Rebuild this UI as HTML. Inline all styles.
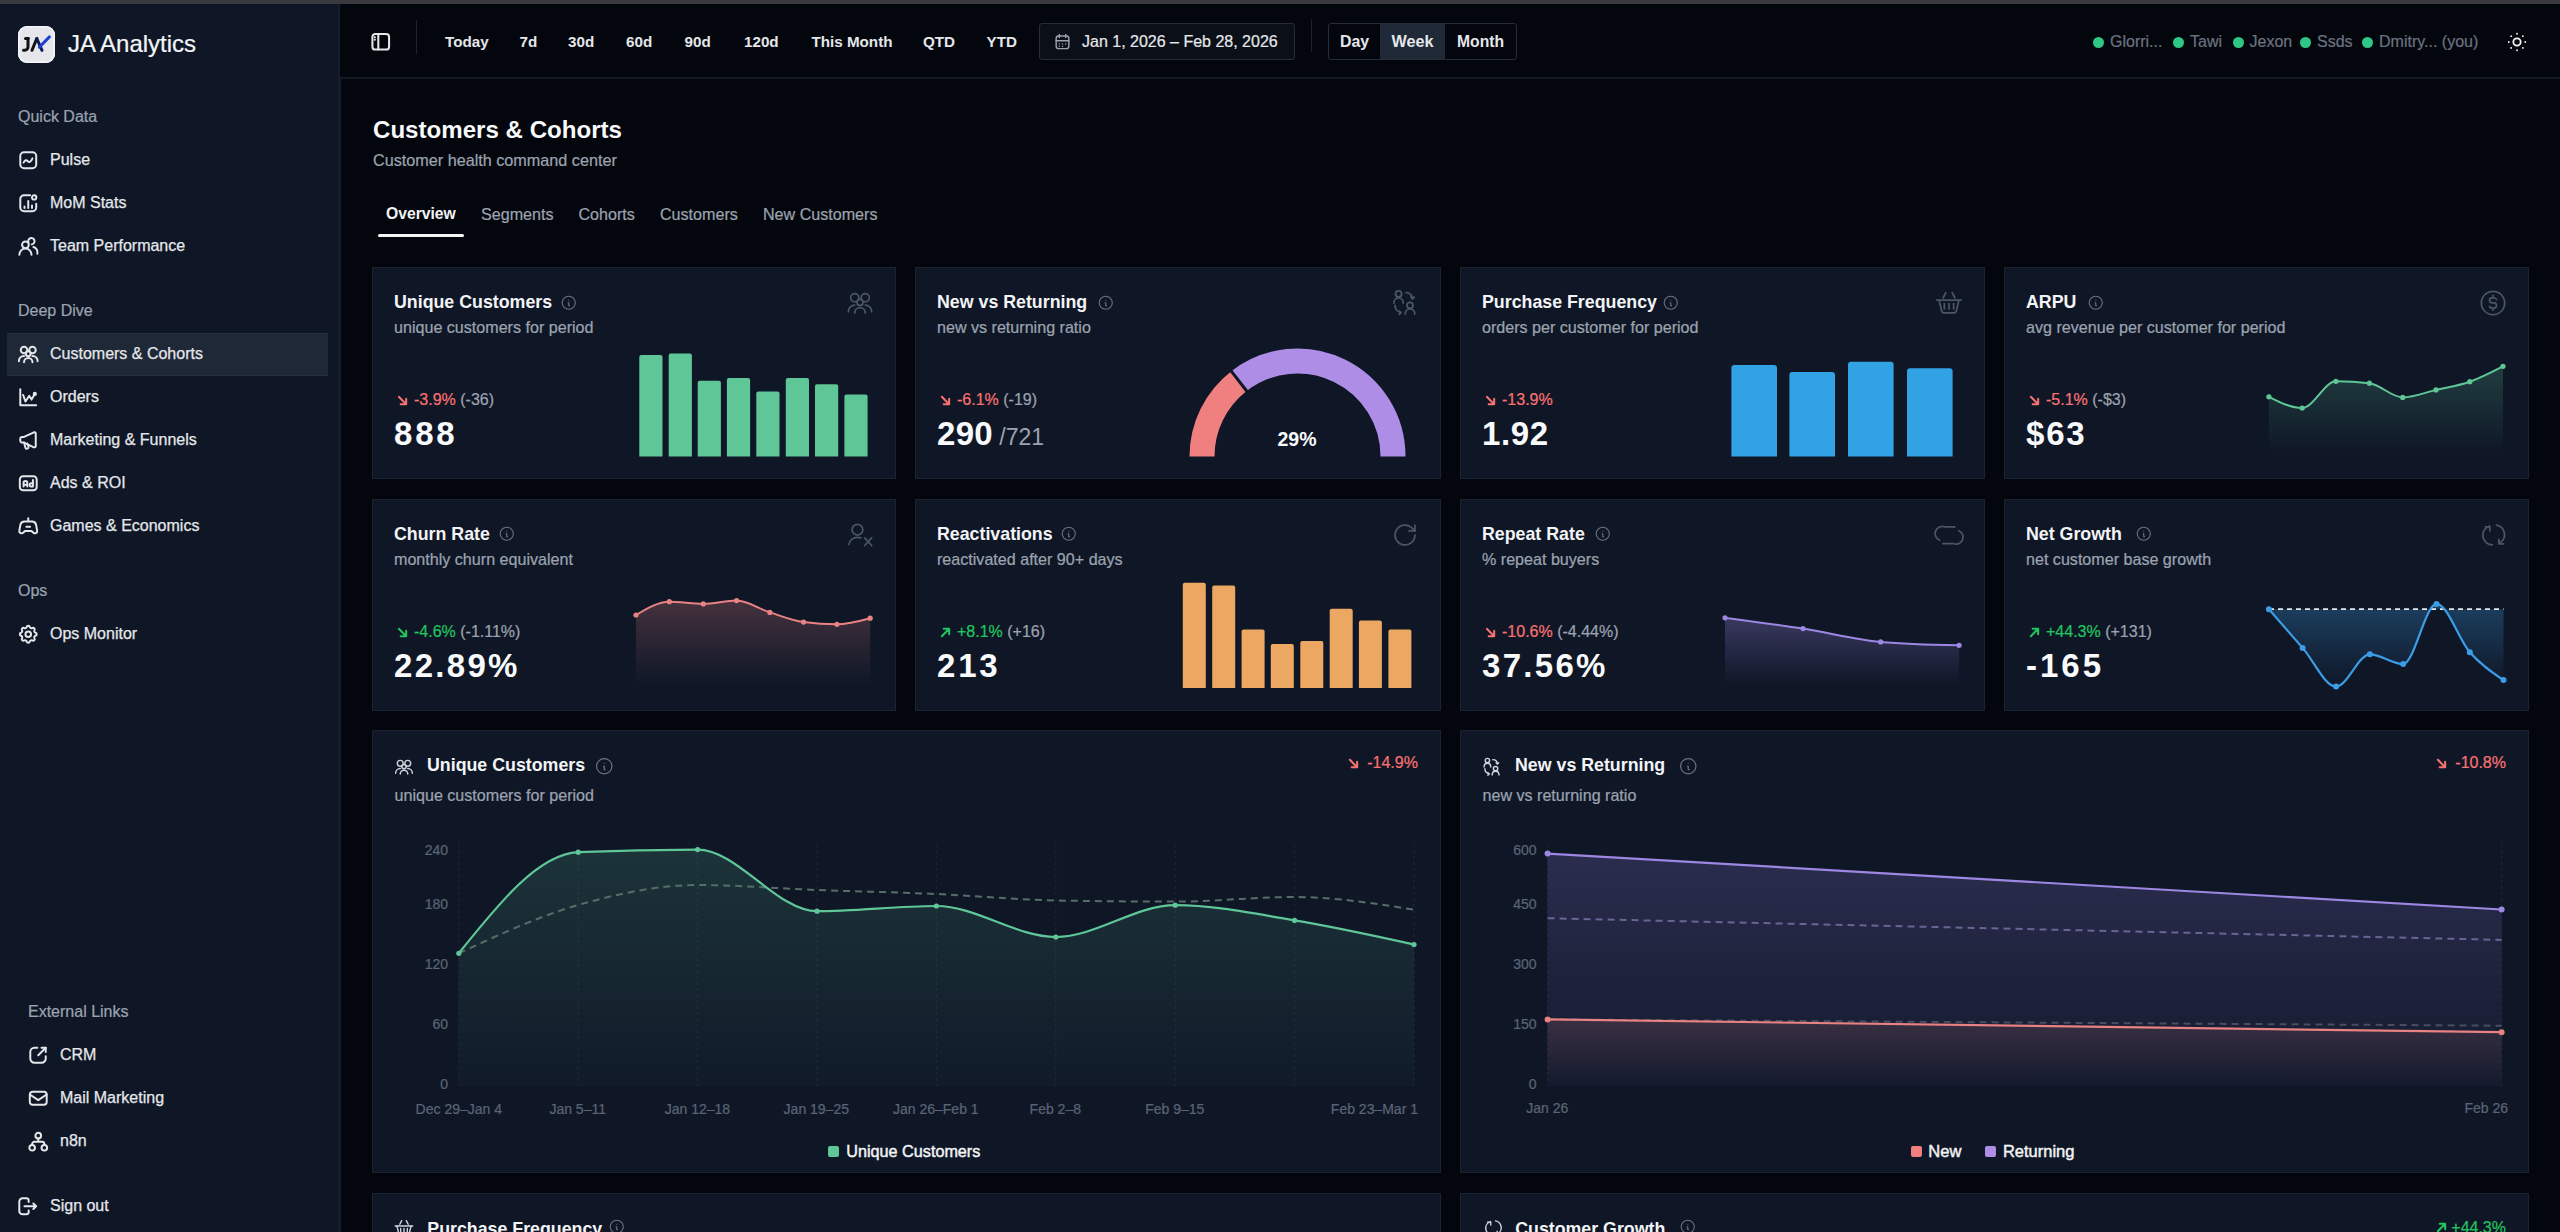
<!DOCTYPE html><html><head><meta charset="utf-8"><title>JA Analytics</title><style>
*{margin:0;padding:0;box-sizing:border-box}
html,body{width:2560px;height:1232px;overflow:hidden;background:#04060d;font-family:"Liberation Sans",sans-serif}
.t{position:absolute;line-height:1;white-space:nowrap}
.r{position:absolute}
.ic{position:absolute;overflow:visible}
svg.abs{position:absolute;left:0;top:0;overflow:visible}
</style></head><body>
<div class="r" style="left:0px;top:0px;width:2560px;height:4px;background:#3a3940;"></div>
<div class="r" style="left:0px;top:4px;width:338px;height:1228px;background:#0f1727;"></div>
<div class="r" style="left:338px;top:4px;width:3px;height:1228px;background:#171d2a;"></div>
<div class="r" style="left:340px;top:4px;width:2220px;height:73px;background:#04060d;"></div>
<div class="r" style="left:340px;top:77px;width:2220px;height:2px;background:#141923;"></div>
<div class="r" style="left:17.5px;top:25.5px;width:37.5px;height:37.5px;background:#e5e7eb;border-radius:9px;box-shadow:inset 0 0 0 1.5px #f5f6fa"></div>
<svg class="abs" width="2560" height="1232" viewBox="0 0 2560 1232" fill="none" stroke-linecap="round"><path d="M25.5 38.5h3M28 38.5v8.5a3.2 3.2 0 0 1-3.2 3.2h-1.3" stroke="#111" stroke-width="3"/><path d="M32 50.3L36.8 38.5" stroke="#111" stroke-width="3"/><path d="M36.8 38.5L42 50.3" stroke="#0b1a5a" stroke-width="3"/><path d="M39.5 47L49.3 37" stroke="#1d3fd0" stroke-width="3.2"/></svg>
<div class="t" style="left:68px;top:32.49px;font-size:24px;font-weight:400;color:#f3f4f6;-webkit-text-stroke:0.22px #f3f4f6;">JA Analytics</div>
<div class="t" style="left:18px;top:109.46px;font-size:16px;font-weight:400;color:#9ca3af;-webkit-text-stroke:0.22px #9ca3af;">Quick Data</div>
<svg class="ic" style="left:16.75px;top:148.75px;width:22.5px;height:22.5px;color:#e5e7eb" viewBox="0 0 24 24" fill="none" stroke="currentColor" stroke-width="2.1" stroke-linecap="round" stroke-linejoin="round"><rect x="3.5" y="3.5" width="17" height="17" rx="4"/><path d="M7 14.5c1.5-3 3-3 4.5-1.5s3 1.5 5-3"/></svg>
<div class="t" style="left:50px;top:152.46px;font-size:16px;font-weight:400;color:#e5e7eb;-webkit-text-stroke:0.25px #e5e7eb">Pulse</div>
<svg class="ic" style="left:16.75px;top:191.75px;width:22.5px;height:22.5px;color:#e5e7eb" viewBox="0 0 24 24" fill="none" stroke="currentColor" stroke-width="2.1" stroke-linecap="round" stroke-linejoin="round"><path d="M20.5 12.5v4a4 4 0 0 1-4 4h-9a4 4 0 0 1-4-4v-9a4 4 0 0 1 4-4H14"/><circle cx="18.3" cy="5.8" r="2.3"/><path d="M8 17v-1.5M12 17V9.5M16 17v-2.5"/></svg>
<div class="t" style="left:50px;top:195.46px;font-size:16px;font-weight:400;color:#e5e7eb;-webkit-text-stroke:0.25px #e5e7eb">MoM Stats</div>
<svg class="ic" style="left:16.75px;top:234.75px;width:22.5px;height:22.5px;color:#e5e7eb" viewBox="0 0 24 24" fill="none" stroke="currentColor" stroke-width="2.1" stroke-linecap="round" stroke-linejoin="round"><circle cx="9" cy="10.5" r="3.6"/><path d="M12.3 8.2a3.4 3.4 0 1 1 3.4 1.8"/><path d="M2.5 21a6.5 6.5 0 0 1 13 0"/><path d="M17.5 12.8a6 6 0 0 1 4.2 7.2"/></svg>
<div class="t" style="left:50px;top:238.46px;font-size:16px;font-weight:400;color:#e5e7eb;-webkit-text-stroke:0.25px #e5e7eb">Team Performance</div>
<div class="t" style="left:18px;top:303.46px;font-size:16px;font-weight:400;color:#9ca3af;-webkit-text-stroke:0.22px #9ca3af;">Deep Dive</div>
<div class="r" style="left:7px;top:333px;width:321px;height:43px;background:#1e2837;box-shadow:inset 0 1px 0 #243042, inset 0 -1px 0 #243042"></div>
<svg class="ic" style="left:16.75px;top:342.75px;width:22.5px;height:22.5px;color:#e5e7eb" viewBox="0 0 24 24" fill="none" stroke="currentColor" stroke-width="2.1" stroke-linecap="round" stroke-linejoin="round"><circle cx="7.5" cy="7.5" r="3.5"/><circle cx="16.5" cy="7.5" r="3.5"/><circle cx="12" cy="11.5" r="2.6"/><path d="M2 19.5c0-3.2 2.3-5.7 5.5-5.7"/><path d="M22 19.5c0-3.2-2.3-5.7-5.5-5.7"/><path d="M7.5 20.5c0-2.6 2-4.6 4.5-4.6s4.5 2 4.5 4.6"/></svg>
<div class="t" style="left:50px;top:346.46px;font-size:16px;font-weight:400;color:#e5e7eb;-webkit-text-stroke:0.25px #e5e7eb">Customers &amp; Cohorts</div>
<svg class="ic" style="left:16.75px;top:385.75px;width:22.5px;height:22.5px;color:#e5e7eb" viewBox="0 0 24 24" fill="none" stroke="currentColor" stroke-width="2.1" stroke-linecap="round" stroke-linejoin="round"><path d="M3.5 3.5v17h17"/><path d="M6.5 9.5l2.5 7 4-6 2.5 4 3.5-6"/><circle cx="19" cy="8.5" r="1.2"/></svg>
<div class="t" style="left:50px;top:389.46px;font-size:16px;font-weight:400;color:#e5e7eb;-webkit-text-stroke:0.25px #e5e7eb">Orders</div>
<svg class="ic" style="left:16.75px;top:428.75px;width:22.5px;height:22.5px;color:#e5e7eb" viewBox="0 0 24 24" fill="none" stroke="currentColor" stroke-width="2.1" stroke-linecap="round" stroke-linejoin="round"><path d="M3.5 10.5a2 2 0 0 1 2-2h2l10.5-5a1.5 1.5 0 0 1 2 1.3v13.4a1.5 1.5 0 0 1-2 1.3l-10.5-5h-2a2 2 0 0 1-2-2z"/><path d="M7.5 14.5l1.5 5.5a1.8 1.8 0 0 0 3.4-1l-1.4-3.5"/></svg>
<div class="t" style="left:50px;top:432.46px;font-size:16px;font-weight:400;color:#e5e7eb;-webkit-text-stroke:0.25px #e5e7eb">Marketing &amp; Funnels</div>
<svg class="ic" style="left:16.75px;top:471.75px;width:22.5px;height:22.5px;color:#e5e7eb" viewBox="0 0 24 24" fill="none" stroke="currentColor" stroke-width="2.1" stroke-linecap="round" stroke-linejoin="round"><rect x="3" y="4.5" width="18" height="15" rx="3.5"/><path d="M7 15.5v-4a2 2 0 0 1 4 0v4M7 13.5h4"/><path d="M17 8.5v7h-1.5a1.8 1.8 0 1 1 1.5-1.8"/></svg>
<div class="t" style="left:50px;top:475.46px;font-size:16px;font-weight:400;color:#e5e7eb;-webkit-text-stroke:0.25px #e5e7eb">Ads &amp; ROI</div>
<svg class="ic" style="left:16.75px;top:514.75px;width:22.5px;height:22.5px;color:#e5e7eb" viewBox="0 0 24 24" fill="none" stroke="currentColor" stroke-width="2.1" stroke-linecap="round" stroke-linejoin="round"><path d="M12 3.5v3"/><path d="M8 7h8a4.5 4.5 0 0 1 4.4 3.6l1.1 6a2.5 2.5 0 0 1-4.4 2L15.5 17h-7L6.9 18.6a2.5 2.5 0 0 1-4.4-2l1.1-6A4.5 4.5 0 0 1 8 7z"/><path d="M10 12.5h4"/></svg>
<div class="t" style="left:50px;top:518.46px;font-size:16px;font-weight:400;color:#e5e7eb;-webkit-text-stroke:0.25px #e5e7eb">Games &amp; Economics</div>
<div class="t" style="left:18px;top:583.46px;font-size:16px;font-weight:400;color:#9ca3af;-webkit-text-stroke:0.22px #9ca3af;">Ops</div>
<svg class="ic" style="left:16.75px;top:622.75px;width:22.5px;height:22.5px;color:#e5e7eb" viewBox="0 0 24 24" fill="none" stroke="currentColor" stroke-width="2.1" stroke-linecap="round" stroke-linejoin="round"><path d="M10.325 4.317c.426-1.756 2.924-1.756 3.35 0a1.724 1.724 0 0 0 2.573 1.066c1.543-.94 3.31.826 2.37 2.37a1.724 1.724 0 0 0 1.065 2.572c1.756.426 1.756 2.924 0 3.35a1.724 1.724 0 0 0-1.066 2.573c.94 1.543-.826 3.31-2.37 2.37a1.724 1.724 0 0 0-2.572 1.065c-.426 1.756-2.924 1.756-3.35 0a1.724 1.724 0 0 0-2.573-1.066c-1.543.94-3.31-.826-2.37-2.37a1.724 1.724 0 0 0-1.065-2.572c-1.756-.426-1.756-2.924 0-3.35a1.724 1.724 0 0 0 1.066-2.573c-.94-1.543.826-3.31 2.37-2.37 1 .608 2.296.07 2.572-1.065z"/><circle cx="12" cy="12" r="3"/></svg>
<div class="t" style="left:50px;top:626.46px;font-size:16px;font-weight:400;color:#e5e7eb;-webkit-text-stroke:0.25px #e5e7eb">Ops Monitor</div>
<div class="t" style="left:28px;top:1004.46px;font-size:16px;font-weight:400;color:#9ca3af;-webkit-text-stroke:0.22px #9ca3af;">External Links</div>
<svg class="ic" style="left:26.75px;top:1043.75px;width:22.5px;height:22.5px;color:#e5e7eb" viewBox="0 0 24 24" fill="none" stroke="currentColor" stroke-width="2.1" stroke-linecap="round" stroke-linejoin="round"><path d="M11 4H8a4.5 4.5 0 0 0-4.5 4.5v7A4.5 4.5 0 0 0 8 20h7.5a4.5 4.5 0 0 0 4.5-4.5V13"/><path d="M12 12l8-8"/><path d="M15.5 4H20v4.5"/></svg>
<div class="t" style="left:60px;top:1047.46px;font-size:16px;font-weight:400;color:#e5e7eb;-webkit-text-stroke:0.25px #e5e7eb">CRM</div>
<svg class="ic" style="left:26.75px;top:1086.75px;width:22.5px;height:22.5px;color:#e5e7eb" viewBox="0 0 24 24" fill="none" stroke="currentColor" stroke-width="2.1" stroke-linecap="round" stroke-linejoin="round"><rect x="3" y="5" width="18" height="14" rx="3"/><path d="M3 8l9 6 9-6"/></svg>
<div class="t" style="left:60px;top:1090.46px;font-size:16px;font-weight:400;color:#e5e7eb;-webkit-text-stroke:0.25px #e5e7eb">Mail Marketing</div>
<svg class="ic" style="left:26.75px;top:1129.75px;width:22.5px;height:22.5px;color:#e5e7eb" viewBox="0 0 24 24" fill="none" stroke="currentColor" stroke-width="2.1" stroke-linecap="round" stroke-linejoin="round"><circle cx="12" cy="6" r="3"/><circle cx="5.5" cy="19" r="3"/><circle cx="18.5" cy="19" r="3"/><path d="M12 9v3.5M5.5 16v-1a2.5 2.5 0 0 1 2.5-2.5h8a2.5 2.5 0 0 1 2.5 2.5v1"/></svg>
<div class="t" style="left:60px;top:1133.46px;font-size:16px;font-weight:400;color:#e5e7eb;-webkit-text-stroke:0.25px #e5e7eb">n8n</div>
<svg class="ic" style="left:15.75px;top:1194.75px;width:22.5px;height:22.5px;color:#e5e7eb" viewBox="0 0 24 24" fill="none" stroke="currentColor" stroke-width="2.1" stroke-linecap="round" stroke-linejoin="round"><path d="M13.5 7.5V6a2.5 2.5 0 0 0-2.5-2.5H7A3.5 3.5 0 0 0 3.5 7v10A3.5 3.5 0 0 0 7 20.5h4a2.5 2.5 0 0 0 2.5-2.5v-1.5"/><path d="M9 12h12.5M18.5 9l3 3-3 3"/></svg>
<div class="t" style="left:50px;top:1198.46px;font-size:16px;font-weight:400;color:#e5e7eb;-webkit-text-stroke:0.25px #e5e7eb">Sign out</div>
<svg class="ic" style="left:369.25px;top:30.25px;width:23.5px;height:23.5px;color:#e5e7eb" viewBox="0 0 24 24" fill="none" stroke="currentColor" stroke-width="2.1" stroke-linecap="round" stroke-linejoin="round"><rect x="3.5" y="4" width="17" height="16" rx="3"/><path d="M9.5 4v16"/><path d="M6 7.5v.01M6 10v.01"/></svg>
<div class="r" style="left:416px;top:20px;width:1px;height:34px;background:#1c212b;"></div>
<div class="t" style="left:445px;top:34.13px;font-size:15.2px;font-weight:700;color:#e5e7eb;">Today</div>
<div class="t" style="left:519.5px;top:34.13px;font-size:15.2px;font-weight:700;color:#e5e7eb;">7d</div>
<div class="t" style="left:568px;top:34.13px;font-size:15.2px;font-weight:700;color:#e5e7eb;">30d</div>
<div class="t" style="left:626px;top:34.13px;font-size:15.2px;font-weight:700;color:#e5e7eb;">60d</div>
<div class="t" style="left:684.5px;top:34.13px;font-size:15.2px;font-weight:700;color:#e5e7eb;">90d</div>
<div class="t" style="left:744px;top:34.13px;font-size:15.2px;font-weight:700;color:#e5e7eb;">120d</div>
<div class="t" style="left:811.5px;top:34.13px;font-size:15.2px;font-weight:700;color:#e5e7eb;">This Month</div>
<div class="t" style="left:923px;top:34.13px;font-size:15.2px;font-weight:700;color:#e5e7eb;">QTD</div>
<div class="t" style="left:986.5px;top:34.13px;font-size:15.2px;font-weight:700;color:#e5e7eb;">YTD</div>
<div class="r" style="left:1039px;top:23px;width:256px;height:37px;background:#0b0f17;border:1px solid #262c38;border-radius:3px"></div>
<svg class="ic" style="left:1053px;top:32px;width:19px;height:19px;color:#9ca3af" viewBox="0 0 24 24" fill="none" stroke="currentColor" stroke-width="1.8" stroke-linecap="round" stroke-linejoin="round"><rect x="4" y="5" width="16" height="16" rx="3"/><path d="M16 3v4M8 3v4M4 11h16"/><path d="M8 15h.01M12 15h.01M16 15h.01M8 18h.01M12 18h.01"/></svg>
<div class="t" style="left:1082px;top:33.96px;font-size:16px;font-weight:400;color:#e5e7eb;-webkit-text-stroke:0.22px #e5e7eb;">Jan 1, 2026 – Feb 28, 2026</div>
<div class="r" style="left:1311px;top:19px;width:1px;height:33px;background:#1c212b;"></div>
<div class="r" style="left:1328px;top:23px;width:189px;height:37px;background:#04060d;border:1px solid #262c38;border-radius:3px"></div>
<div class="r" style="left:1380px;top:24px;width:65px;height:35px;background:#1f2937;"></div>
<div class="t" style="left:1340px;top:33.54px;font-size:15.9px;font-weight:700;color:#e5e7eb;">Day</div>
<div class="t" style="left:1391.5px;top:33.29px;font-size:16.2px;font-weight:700;color:#e5e7eb;">Week</div>
<div class="t" style="left:1457px;top:33.71px;font-size:15.7px;font-weight:700;color:#e5e7eb;">Month</div>
<div class="r" style="left:2092.5px;top:37px;width:11px;height:11px;background:#2fc786;border-radius:50%"></div>
<div class="t" style="left:2110px;top:34.46px;font-size:16px;font-weight:400;color:#6b7280;-webkit-text-stroke:0.22px #6b7280;">Glorri...</div>
<div class="r" style="left:2172.5px;top:37px;width:11px;height:11px;background:#2fc786;border-radius:50%"></div>
<div class="t" style="left:2190px;top:34.46px;font-size:16px;font-weight:400;color:#6b7280;-webkit-text-stroke:0.22px #6b7280;">Tawi</div>
<div class="r" style="left:2232.5px;top:37px;width:11px;height:11px;background:#2fc786;border-radius:50%"></div>
<div class="t" style="left:2249.5px;top:34.46px;font-size:16px;font-weight:400;color:#6b7280;-webkit-text-stroke:0.22px #6b7280;">Jexon</div>
<div class="r" style="left:2300.0px;top:37px;width:11px;height:11px;background:#2fc786;border-radius:50%"></div>
<div class="t" style="left:2317px;top:34.46px;font-size:16px;font-weight:400;color:#6b7280;-webkit-text-stroke:0.22px #6b7280;">Ssds</div>
<div class="r" style="left:2362.0px;top:37px;width:11px;height:11px;background:#2fc786;border-radius:50%"></div>
<div class="t" style="left:2379px;top:34.46px;font-size:16px;font-weight:400;color:#6b7280;-webkit-text-stroke:0.22px #6b7280;">Dmitry... (you)</div>
<svg class="ic" style="left:2506px;top:31px;width:22px;height:22px;color:#f3f4f6" viewBox="0 0 24 24" fill="none" stroke="currentColor" stroke-width="2" stroke-linecap="round" stroke-linejoin="round"><circle cx="12" cy="12" r="4"/><path d="M3 12h.01M12 3v.01M21 12h.01M12 21v.01M5.6 5.6v.01M18.4 5.6v.01M18.4 18.4v.01M5.6 18.4v.01"/></svg>
<div class="t" style="left:373px;top:118.10px;font-size:24.1px;font-weight:700;color:#f9fafb;">Customers &amp; Cohorts</div>
<div class="t" style="left:373px;top:152.09px;font-size:16.2px;font-weight:400;color:#9ca3af;-webkit-text-stroke:0.22px #9ca3af;">Customer health command center</div>
<div class="t" style="left:386px;top:205.91px;font-size:15.7px;font-weight:700;color:#f3f4f6;">Overview</div>
<div class="t" style="left:481px;top:205.57px;font-size:16.1px;font-weight:400;color:#9ca3af;-webkit-text-stroke:0.22px #9ca3af;">Segments</div>
<div class="t" style="left:578.5px;top:205.57px;font-size:16.1px;font-weight:400;color:#9ca3af;-webkit-text-stroke:0.22px #9ca3af;">Cohorts</div>
<div class="t" style="left:660px;top:205.57px;font-size:16.1px;font-weight:400;color:#9ca3af;-webkit-text-stroke:0.22px #9ca3af;">Customers</div>
<div class="t" style="left:763px;top:205.57px;font-size:16.1px;font-weight:400;color:#9ca3af;-webkit-text-stroke:0.22px #9ca3af;">New Customers</div>
<div class="r" style="left:378px;top:234px;width:86px;height:3px;background:#f3f4f6;border-radius:2px"></div>
<div class="r" style="left:372px;top:267px;width:524px;height:212px;background:#0f1727;border:1px solid #1b2232"></div>
<div class="t" style="left:394px;top:293.63px;font-size:17.8px;font-weight:700;color:#f3f4f6;">Unique Customers</div>
<div class="t" style="left:394px;top:318.67px;font-size:16.1px;font-weight:400;color:#9ca3af;-webkit-text-stroke:0.22px #9ca3af;">unique customers for period</div>
<svg class="ic" style="left:846.0px;top:289.0px;width:28px;height:28px;color:#4b5563" viewBox="0 0 24 24" fill="none" stroke="currentColor" stroke-width="1.5" stroke-linecap="round" stroke-linejoin="round"><circle cx="7.5" cy="7.5" r="3.5"/><circle cx="16.5" cy="7.5" r="3.5"/><circle cx="12" cy="11.5" r="2.6"/><path d="M2 19.5c0-3.2 2.3-5.7 5.5-5.7"/><path d="M22 19.5c0-3.2-2.3-5.7-5.5-5.7"/><path d="M7.5 20.5c0-2.6 2-4.6 4.5-4.6s4.5 2 4.5 4.6"/></svg>
<svg class="ic" style="left:397px;top:395.4px;width:11px;height:11px" viewBox="0 0 12 12" fill="none" stroke="#f87171" stroke-width="2.2" stroke-linecap="round" stroke-linejoin="round"><path d="M2 2l8 8M4 10h6V4"/></svg>
<div class="t" style="left:414px;top:391.86px;font-size:16px;color:#f87171;-webkit-text-stroke:0.22px #f87171">-3.9% <span style="color:#9ca3af;-webkit-text-stroke:0.22px #9ca3af">(-36)</span></div>
<div class="t" style="left:394px;top:417.17px;font-size:33px;font-weight:700;color:#f9fafb;letter-spacing:2.8px">888</div>
<div class="r" style="left:915px;top:267px;width:526px;height:212px;background:#0f1727;border:1px solid #1b2232"></div>
<div class="t" style="left:937px;top:293.63px;font-size:17.8px;font-weight:700;color:#f3f4f6;">New vs Returning</div>
<div class="t" style="left:937px;top:318.67px;font-size:16.1px;font-weight:400;color:#9ca3af;-webkit-text-stroke:0.22px #9ca3af;">new vs returning ratio</div>
<svg class="ic" style="left:1391.0px;top:289.0px;width:28px;height:28px;color:#4b5563" viewBox="0 0 24 24" fill="none" stroke="currentColor" stroke-width="1.5" stroke-linecap="round" stroke-linejoin="round"><circle cx="6.5" cy="4.2" r="2.6"/><path d="M2.5 12c0-2.6 1.8-4.5 4-4.5s4 1.9 4 4.5"/><circle cx="16.3" cy="14" r="2.6"/><path d="M12.2 21.5c0-2.6 1.8-4.4 4.1-4.4s4.1 1.8 4.1 4.4"/><path d="M13 3.2a5.5 5.5 0 0 1 5.5 5"/><path d="M17 7l1.5 1.5L20 7"/><path d="M3.5 14a5.5 5.5 0 0 0 5 6"/><path d="M7 19l1.5 1.3L7 21.8"/></svg>
<svg class="ic" style="left:940px;top:395.4px;width:11px;height:11px" viewBox="0 0 12 12" fill="none" stroke="#f87171" stroke-width="2.2" stroke-linecap="round" stroke-linejoin="round"><path d="M2 2l8 8M4 10h6V4"/></svg>
<div class="t" style="left:957px;top:391.86px;font-size:16px;color:#f87171;-webkit-text-stroke:0.22px #f87171">-6.1% <span style="color:#9ca3af;-webkit-text-stroke:0.22px #9ca3af">(-19)</span></div>
<div class="t" style="left:937px;top:417.17px;font-size:33px;font-weight:700;color:#f9fafb;letter-spacing:0.3px">290<span style="font-size:23px;font-weight:400;color:#9ca3af;letter-spacing:0"> /721</span></div>
<div class="r" style="left:1460px;top:267px;width:525px;height:212px;background:#0f1727;border:1px solid #1b2232"></div>
<div class="t" style="left:1482px;top:293.63px;font-size:17.8px;font-weight:700;color:#f3f4f6;">Purchase Frequency</div>
<div class="t" style="left:1482px;top:318.67px;font-size:16.1px;font-weight:400;color:#9ca3af;-webkit-text-stroke:0.22px #9ca3af;">orders per customer for period</div>
<svg class="ic" style="left:1935.0px;top:289.0px;width:28px;height:28px;color:#4b5563" viewBox="0 0 24 24" fill="none" stroke="currentColor" stroke-width="1.5" stroke-linecap="round" stroke-linejoin="round"><path d="M1.5 9.5h21"/><path d="M3.5 9.5l2.2 9.3a2.2 2.2 0 0 0 2.1 1.7h8.4a2.2 2.2 0 0 0 2.1-1.7l2.2-9.3"/><path d="M7 7.5l2.2-4.3M17 7.5l-2.2-4.3"/><path d="M8 12.5v4.5M12 12.5v4.5M16 12.5v4.5"/></svg>
<svg class="ic" style="left:1485px;top:395.4px;width:11px;height:11px" viewBox="0 0 12 12" fill="none" stroke="#f87171" stroke-width="2.2" stroke-linecap="round" stroke-linejoin="round"><path d="M2 2l8 8M4 10h6V4"/></svg>
<div class="t" style="left:1502px;top:391.86px;font-size:16px;color:#f87171;-webkit-text-stroke:0.22px #f87171">-13.9%<span style="color:#9ca3af;-webkit-text-stroke:0.22px #9ca3af"></span></div>
<div class="t" style="left:1482px;top:417.17px;font-size:33px;font-weight:700;color:#f9fafb;letter-spacing:0.6px">1.92</div>
<div class="r" style="left:2004px;top:267px;width:525px;height:212px;background:#0f1727;border:1px solid #1b2232"></div>
<div class="t" style="left:2026px;top:293.63px;font-size:17.8px;font-weight:700;color:#f3f4f6;">ARPU</div>
<div class="t" style="left:2026px;top:318.67px;font-size:16.1px;font-weight:400;color:#9ca3af;-webkit-text-stroke:0.22px #9ca3af;">avg revenue per customer for period</div>
<svg class="ic" style="left:2479.0px;top:289.0px;width:28px;height:28px;color:#4b5563" viewBox="0 0 24 24" fill="none" stroke="currentColor" stroke-width="1.5" stroke-linecap="round" stroke-linejoin="round"><circle cx="12" cy="12" r="10"/><path d="M15 9a2.4 2.4 0 0 0-2.2-1.5h-1.6a2.2 2.2 0 0 0 0 4.4h1.6a2.2 2.2 0 0 1 0 4.4h-1.6A2.4 2.4 0 0 1 9 15"/><path d="M12 5.5v2M12 16.3v2"/></svg>
<svg class="ic" style="left:2029px;top:395.4px;width:11px;height:11px" viewBox="0 0 12 12" fill="none" stroke="#f87171" stroke-width="2.2" stroke-linecap="round" stroke-linejoin="round"><path d="M2 2l8 8M4 10h6V4"/></svg>
<div class="t" style="left:2046px;top:391.86px;font-size:16px;color:#f87171;-webkit-text-stroke:0.22px #f87171">-5.1% <span style="color:#9ca3af;-webkit-text-stroke:0.22px #9ca3af">(-$3)</span></div>
<div class="t" style="left:2026px;top:417.17px;font-size:33px;font-weight:700;color:#f9fafb;letter-spacing:1.8px">$63</div>
<div class="r" style="left:372px;top:499px;width:524px;height:212px;background:#0f1727;border:1px solid #1b2232"></div>
<div class="t" style="left:394px;top:525.63px;font-size:17.8px;font-weight:700;color:#f3f4f6;">Churn Rate</div>
<div class="t" style="left:394px;top:550.67px;font-size:16.1px;font-weight:400;color:#9ca3af;-webkit-text-stroke:0.22px #9ca3af;">monthly churn equivalent</div>
<svg class="ic" style="left:846.0px;top:521.0px;width:28px;height:28px;color:#4b5563" viewBox="0 0 24 24" fill="none" stroke="currentColor" stroke-width="1.5" stroke-linecap="round" stroke-linejoin="round"><circle cx="9.8" cy="7.4" r="4.6"/><path d="M2.5 20c.5-3.5 3.5-6 7.3-6 1 0 2 .2 2.8.5"/><path d="M16 14.5l6 6.5M22 14.5l-6 6.5"/></svg>
<svg class="ic" style="left:397px;top:627.4px;width:11px;height:11px" viewBox="0 0 12 12" fill="none" stroke="#22c55e" stroke-width="2.2" stroke-linecap="round" stroke-linejoin="round"><path d="M2 2l8 8M4 10h6V4"/></svg>
<div class="t" style="left:414px;top:623.86px;font-size:16px;color:#22c55e;-webkit-text-stroke:0.22px #22c55e">-4.6% <span style="color:#9ca3af;-webkit-text-stroke:0.22px #9ca3af">(-1.11%)</span></div>
<div class="t" style="left:394px;top:649.17px;font-size:33px;font-weight:700;color:#f9fafb;letter-spacing:2.3px">22.89%</div>
<div class="r" style="left:915px;top:499px;width:526px;height:212px;background:#0f1727;border:1px solid #1b2232"></div>
<div class="t" style="left:937px;top:525.63px;font-size:17.8px;font-weight:700;color:#f3f4f6;">Reactivations</div>
<div class="t" style="left:937px;top:550.67px;font-size:16.1px;font-weight:400;color:#9ca3af;-webkit-text-stroke:0.22px #9ca3af;">reactivated after 90+ days</div>
<svg class="ic" style="left:1391.0px;top:521.0px;width:28px;height:28px;color:#4b5563" viewBox="0 0 24 24" fill="none" stroke="currentColor" stroke-width="1.5" stroke-linecap="round" stroke-linejoin="round"><path d="M20.5 12a8.5 8.5 0 1 1-2.5-6L20.5 8.5"/><path d="M20.5 3.5v5h-5"/></svg>
<svg class="ic" style="left:940px;top:627.4px;width:11px;height:11px" viewBox="0 0 12 12" fill="none" stroke="#22c55e" stroke-width="2.2" stroke-linecap="round" stroke-linejoin="round"><path d="M2 10l8-8M4 2h6v6"/></svg>
<div class="t" style="left:957px;top:623.86px;font-size:16px;color:#22c55e;-webkit-text-stroke:0.22px #22c55e">+8.1% <span style="color:#9ca3af;-webkit-text-stroke:0.22px #9ca3af">(+16)</span></div>
<div class="t" style="left:937px;top:649.17px;font-size:33px;font-weight:700;color:#f9fafb;letter-spacing:2.8px">213</div>
<div class="r" style="left:1460px;top:499px;width:525px;height:212px;background:#0f1727;border:1px solid #1b2232"></div>
<div class="t" style="left:1482px;top:525.63px;font-size:17.8px;font-weight:700;color:#f3f4f6;">Repeat Rate</div>
<div class="t" style="left:1482px;top:550.67px;font-size:16.1px;font-weight:400;color:#9ca3af;-webkit-text-stroke:0.22px #9ca3af;">% repeat buyers</div>
<svg class="ic" style="left:1935.0px;top:521.0px;width:28px;height:28px;color:#4b5563" viewBox="0 0 24 24" fill="none" stroke="currentColor" stroke-width="1.5" stroke-linecap="round" stroke-linejoin="round"><path d="M17 5H8.5a5.5 5.5 0 0 0-4.5 11.5"/><path d="M7 19.3h8.5a5.5 5.5 0 0 0 5-11"/><path d="M16.5 5.2v.01M7.2 19.3v.01"/></svg>
<svg class="ic" style="left:1485px;top:627.4px;width:11px;height:11px" viewBox="0 0 12 12" fill="none" stroke="#f87171" stroke-width="2.2" stroke-linecap="round" stroke-linejoin="round"><path d="M2 2l8 8M4 10h6V4"/></svg>
<div class="t" style="left:1502px;top:623.86px;font-size:16px;color:#f87171;-webkit-text-stroke:0.22px #f87171">-10.6% <span style="color:#9ca3af;-webkit-text-stroke:0.22px #9ca3af">(-4.44%)</span></div>
<div class="t" style="left:1482px;top:649.17px;font-size:33px;font-weight:700;color:#f9fafb;letter-spacing:2.3px">37.56%</div>
<div class="r" style="left:2004px;top:499px;width:525px;height:212px;background:#0f1727;border:1px solid #1b2232"></div>
<div class="t" style="left:2026px;top:525.63px;font-size:17.8px;font-weight:700;color:#f3f4f6;">Net Growth</div>
<div class="t" style="left:2026px;top:550.67px;font-size:16.1px;font-weight:400;color:#9ca3af;-webkit-text-stroke:0.22px #9ca3af;">net customer base growth</div>
<svg class="ic" style="left:2479.0px;top:521.0px;width:28px;height:28px;color:#4b5563" viewBox="0 0 24 24" fill="none" stroke="currentColor" stroke-width="1.5" stroke-linecap="round" stroke-linejoin="round"><path d="M9 4.3A8.3 8.3 0 0 0 11.5 20.5"/><path d="M15 3.5a8.3 8.3 0 0 1 3.3 15"/><path d="M5.5 5h3.8V8.5"/><path d="M21 19.5h-4v-3.8"/></svg>
<svg class="ic" style="left:2029px;top:627.4px;width:11px;height:11px" viewBox="0 0 12 12" fill="none" stroke="#22c55e" stroke-width="2.2" stroke-linecap="round" stroke-linejoin="round"><path d="M2 10l8-8M4 2h6v6"/></svg>
<div class="t" style="left:2046px;top:623.86px;font-size:16px;color:#22c55e;-webkit-text-stroke:0.22px #22c55e">+44.3% <span style="color:#9ca3af;-webkit-text-stroke:0.22px #9ca3af">(+131)</span></div>
<div class="t" style="left:2026px;top:649.17px;font-size:33px;font-weight:700;color:#f9fafb;letter-spacing:3px">-165</div>
<svg class="ic" style="left:559.55px;top:294.05px;width:17.5px;height:17.5px;color:#6b7280" viewBox="0 0 24 24" fill="none" stroke="currentColor" stroke-width="1.5" stroke-linecap="round" stroke-linejoin="round"><circle cx="12" cy="12" r="9"/><path d="M12 8.5v.01"/><path d="M11 12h1v4h1"/></svg>
<svg class="ic" style="left:1097.05px;top:294.05px;width:17.5px;height:17.5px;color:#6b7280" viewBox="0 0 24 24" fill="none" stroke="currentColor" stroke-width="1.5" stroke-linecap="round" stroke-linejoin="round"><circle cx="12" cy="12" r="9"/><path d="M12 8.5v.01"/><path d="M11 12h1v4h1"/></svg>
<svg class="ic" style="left:1661.55px;top:294.05px;width:17.5px;height:17.5px;color:#6b7280" viewBox="0 0 24 24" fill="none" stroke="currentColor" stroke-width="1.5" stroke-linecap="round" stroke-linejoin="round"><circle cx="12" cy="12" r="9"/><path d="M12 8.5v.01"/><path d="M11 12h1v4h1"/></svg>
<svg class="ic" style="left:2087.05px;top:294.05px;width:17.5px;height:17.5px;color:#6b7280" viewBox="0 0 24 24" fill="none" stroke="currentColor" stroke-width="1.5" stroke-linecap="round" stroke-linejoin="round"><circle cx="12" cy="12" r="9"/><path d="M12 8.5v.01"/><path d="M11 12h1v4h1"/></svg>
<svg class="ic" style="left:497.55px;top:525.05px;width:17.5px;height:17.5px;color:#6b7280" viewBox="0 0 24 24" fill="none" stroke="currentColor" stroke-width="1.5" stroke-linecap="round" stroke-linejoin="round"><circle cx="12" cy="12" r="9"/><path d="M12 8.5v.01"/><path d="M11 12h1v4h1"/></svg>
<svg class="ic" style="left:1059.55px;top:525.05px;width:17.5px;height:17.5px;color:#6b7280" viewBox="0 0 24 24" fill="none" stroke="currentColor" stroke-width="1.5" stroke-linecap="round" stroke-linejoin="round"><circle cx="12" cy="12" r="9"/><path d="M12 8.5v.01"/><path d="M11 12h1v4h1"/></svg>
<svg class="ic" style="left:1594.05px;top:525.05px;width:17.5px;height:17.5px;color:#6b7280" viewBox="0 0 24 24" fill="none" stroke="currentColor" stroke-width="1.5" stroke-linecap="round" stroke-linejoin="round"><circle cx="12" cy="12" r="9"/><path d="M12 8.5v.01"/><path d="M11 12h1v4h1"/></svg>
<svg class="ic" style="left:2134.55px;top:525.05px;width:17.5px;height:17.5px;color:#6b7280" viewBox="0 0 24 24" fill="none" stroke="currentColor" stroke-width="1.5" stroke-linecap="round" stroke-linejoin="round"><circle cx="12" cy="12" r="9"/><path d="M12 8.5v.01"/><path d="M11 12h1v4h1"/></svg>
<svg class="abs" width="2560" height="1232" viewBox="0 0 2560 1232"><path d="M639.3 456.5V356.9q0-2 2-2h19.2q2 0 2 2V456.5z" fill="#5fc697"/><path d="M668.7 456.5V355.4q0-2 2-2h19.2q2 0 2 2V456.5z" fill="#5fc697"/><path d="M697.7 456.5V382.7q0-2 2-2h19.2q2 0 2 2V456.5z" fill="#5fc697"/><path d="M726.9 456.5V380.1q0-2 2-2h19.2q2 0 2 2V456.5z" fill="#5fc697"/><path d="M756.3 456.5V393.4q0-2 2-2h19.2q2 0 2 2V456.5z" fill="#5fc697"/><path d="M785.8 456.5V379.9q0-2 2-2h19.2q2 0 2 2V456.5z" fill="#5fc697"/><path d="M815.0 456.5V386.3q0-2 2-2h19.2q2 0 2 2V456.5z" fill="#5fc697"/><path d="M844.4 456.5V396.6q0-2 2-2h19.2q2 0 2 2V456.5z" fill="#5fc697"/><path d="M1202.00 456.50A95.5 95.5 0 0 1 1238.97 381.04" stroke="#f08080" stroke-width="25" fill="none"/><path d="M1238.97 381.04A95.5 95.5 0 0 1 1393.00 456.50" stroke="#ae8de6" stroke-width="25" fill="none"/><path d="M1247.85 392.50L1230.08 369.58" stroke="#0f1727" stroke-width="3"/><path d="M1731.4 456.5V368.0q0-3 3-3h39.6q3 0 3 3V456.5z" fill="#31a3e4"/><path d="M1789.4 456.5V375.1q0-3 3-3h39.6q3 0 3 3V456.5z" fill="#31a3e4"/><path d="M1848.0 456.5V364.8q0-3 3-3h39.6q3 0 3 3V456.5z" fill="#31a3e4"/><path d="M1907.0 456.5V371.2q0-3 3-3h39.6q3 0 3 3V456.5z" fill="#31a3e4"/><defs><linearGradient id="g1" x1="0" y1="0" x2="0" y2="1"><stop offset="0" stop-color="#5fc697" stop-opacity="0.22"/><stop offset="1" stop-color="#5fc697" stop-opacity="0"/></linearGradient></defs><path d="M2268.90,396.80C2280.00,402.40,2291.10,408.00,2302.20,408.00C2313.43,408.00,2324.67,381.30,2335.90,381.30C2347.07,381.30,2358.23,381.93,2369.40,383.20C2380.50,384.46,2391.60,397.40,2402.70,397.40C2413.80,397.40,2424.90,392.50,2436.00,389.90C2447.27,387.27,2458.53,385.69,2469.80,381.70C2480.87,377.78,2491.93,372.04,2503.00,366.30L2503.00,452L2268.90,452Z" fill="url(#g1)"/><path d="M2268.90,396.80C2280.00,402.40,2291.10,408.00,2302.20,408.00C2313.43,408.00,2324.67,381.30,2335.90,381.30C2347.07,381.30,2358.23,381.93,2369.40,383.20C2380.50,384.46,2391.60,397.40,2402.70,397.40C2413.80,397.40,2424.90,392.50,2436.00,389.90C2447.27,387.27,2458.53,385.69,2469.80,381.70C2480.87,377.78,2491.93,372.04,2503.00,366.30" stroke="#5fc697" stroke-width="2" fill="none"/><circle cx="2268.90" cy="396.80" r="2.6" fill="#5fc697"/><circle cx="2302.20" cy="408.00" r="2.6" fill="#5fc697"/><circle cx="2335.90" cy="381.30" r="2.6" fill="#5fc697"/><circle cx="2369.40" cy="383.20" r="2.6" fill="#5fc697"/><circle cx="2402.70" cy="397.40" r="2.6" fill="#5fc697"/><circle cx="2436.00" cy="389.90" r="2.6" fill="#5fc697"/><circle cx="2469.80" cy="381.70" r="2.6" fill="#5fc697"/><circle cx="2503.00" cy="366.30" r="2.6" fill="#5fc697"/><defs><linearGradient id="g2" x1="0" y1="0" x2="0" y2="1"><stop offset="0" stop-color="#e98282" stop-opacity="0.25"/><stop offset="1" stop-color="#e98282" stop-opacity="0"/></linearGradient></defs><path d="M636.00,615.00C647.10,608.35,658.20,601.70,669.30,601.70C680.63,601.70,691.97,603.90,703.30,603.90C714.40,603.90,725.50,600.60,736.60,600.60C747.70,600.60,758.80,608.83,769.90,612.40C781.13,616.01,792.37,620.62,803.60,622.10C814.70,623.57,825.80,624.30,836.90,624.30C848.00,624.30,859.10,621.25,870.20,618.20L870.20,684L636.00,684Z" fill="url(#g2)"/><path d="M636.00,615.00C647.10,608.35,658.20,601.70,669.30,601.70C680.63,601.70,691.97,603.90,703.30,603.90C714.40,603.90,725.50,600.60,736.60,600.60C747.70,600.60,758.80,608.83,769.90,612.40C781.13,616.01,792.37,620.62,803.60,622.10C814.70,623.57,825.80,624.30,836.90,624.30C848.00,624.30,859.10,621.25,870.20,618.20" stroke="#e98282" stroke-width="2" fill="none"/><circle cx="636.00" cy="615.00" r="2.6" fill="#e98282"/><circle cx="669.30" cy="601.70" r="2.6" fill="#e98282"/><circle cx="703.30" cy="603.90" r="2.6" fill="#e98282"/><circle cx="736.60" cy="600.60" r="2.6" fill="#e98282"/><circle cx="769.90" cy="612.40" r="2.6" fill="#e98282"/><circle cx="803.60" cy="622.10" r="2.6" fill="#e98282"/><circle cx="836.90" cy="624.30" r="2.6" fill="#e98282"/><circle cx="870.20" cy="618.20" r="2.6" fill="#e98282"/><path d="M1182.8 688V584.8q0-2 2-2h19q2 0 2 2V688z" fill="#eca862"/><path d="M1212.2 688V587.6q0-2 2-2h19q2 0 2 2V688z" fill="#eca862"/><path d="M1241.6 688V631.6q0-2 2-2h19q2 0 2 2V688z" fill="#eca862"/><path d="M1270.8 688V646.0q0-2 2-2h19q2 0 2 2V688z" fill="#eca862"/><path d="M1300.3 688V643.0q0-2 2-2h19q2 0 2 2V688z" fill="#eca862"/><path d="M1329.7 688V610.8q0-2 2-2h19q2 0 2 2V688z" fill="#eca862"/><path d="M1358.9 688V622.4q0-2 2-2h19q2 0 2 2V688z" fill="#eca862"/><path d="M1388.4 688V631.6q0-2 2-2h19q2 0 2 2V688z" fill="#eca862"/><defs><linearGradient id="g3" x1="0" y1="0" x2="0" y2="1"><stop offset="0" stop-color="#9d87e3" stop-opacity="0.3"/><stop offset="1" stop-color="#9d87e3" stop-opacity="0"/></linearGradient></defs><path d="M1725.00,617.80C1751.00,621.19,1777.00,624.57,1803.00,628.60C1828.90,632.61,1854.80,639.65,1880.70,641.90C1906.83,644.17,1932.97,644.73,1959.10,645.30L1959.10,684L1725.00,684Z" fill="url(#g3)"/><path d="M1725.00,617.80C1751.00,621.19,1777.00,624.57,1803.00,628.60C1828.90,632.61,1854.80,639.65,1880.70,641.90C1906.83,644.17,1932.97,644.73,1959.10,645.30" stroke="#9d87e3" stroke-width="2" fill="none"/><circle cx="1725.00" cy="617.80" r="2.6" fill="#9d87e3"/><circle cx="1803.00" cy="628.60" r="2.6" fill="#9d87e3"/><circle cx="1880.70" cy="641.90" r="2.6" fill="#9d87e3"/><circle cx="1959.10" cy="645.30" r="2.6" fill="#9d87e3"/><defs><linearGradient id="g4" x1="0" y1="0" x2="0" y2="1"><stop offset="0" stop-color="#3b9de6" stop-opacity="0.3"/><stop offset="1" stop-color="#3b9de6" stop-opacity="0"/></linearGradient></defs><path d="M2268.90,609.20C2280.13,622.08,2291.37,634.96,2302.60,647.90C2313.77,660.76,2324.93,686.60,2336.10,686.60C2347.37,686.60,2358.63,654.30,2369.90,654.30C2381.00,654.30,2392.10,664.00,2403.20,664.00C2414.30,664.00,2425.40,603.90,2436.50,603.90C2447.60,603.90,2458.70,639.53,2469.80,652.20C2481.03,665.02,2492.27,672.56,2503.50,680.10L2503.5,609.2L2268.9,609.2Z" fill="url(#g4)"/><path d="M2269 609.2H2503.5" stroke="#e5e7eb" stroke-width="1.8" stroke-dasharray="5 4"/><path d="M2268.90,609.20C2280.13,622.08,2291.37,634.96,2302.60,647.90C2313.77,660.76,2324.93,686.60,2336.10,686.60C2347.37,686.60,2358.63,654.30,2369.90,654.30C2381.00,654.30,2392.10,664.00,2403.20,664.00C2414.30,664.00,2425.40,603.90,2436.50,603.90C2447.60,603.90,2458.70,639.53,2469.80,652.20C2481.03,665.02,2492.27,672.56,2503.50,680.10" stroke="#3b9de6" stroke-width="2.2" fill="none"/><circle cx="2268.90" cy="609.20" r="3" fill="#3b9de6"/><circle cx="2302.60" cy="647.90" r="3" fill="#3b9de6"/><circle cx="2336.10" cy="686.60" r="3" fill="#3b9de6"/><circle cx="2369.90" cy="654.30" r="3" fill="#3b9de6"/><circle cx="2403.20" cy="664.00" r="3" fill="#3b9de6"/><circle cx="2436.50" cy="603.90" r="3" fill="#3b9de6"/><circle cx="2469.80" cy="652.20" r="3" fill="#3b9de6"/><circle cx="2503.50" cy="680.10" r="3" fill="#3b9de6"/></svg>
<div class="t" style="left:1277.5px;top:429.70px;font-size:19.5px;font-weight:700;color:#f9fafb;">29%</div>
<div class="r" style="left:372px;top:730px;width:1069px;height:443px;background:#0f1727;border:1px solid #1b2232"></div>
<div class="r" style="left:372px;top:1193px;width:1069px;height:60px;background:#0f1727;border:1px solid #1b2232"></div>
<div class="r" style="left:1460px;top:730px;width:1069px;height:443px;background:#0f1727;border:1px solid #1b2232"></div>
<div class="r" style="left:1460px;top:1193px;width:1069px;height:60px;background:#0f1727;border:1px solid #1b2232"></div>
<svg class="ic" style="left:393.5px;top:757px;width:20px;height:20px;color:#d1d5db" viewBox="0 0 24 24" fill="none" stroke="currentColor" stroke-width="1.7" stroke-linecap="round" stroke-linejoin="round"><circle cx="7.5" cy="7.5" r="3.5"/><circle cx="16.5" cy="7.5" r="3.5"/><circle cx="12" cy="11.5" r="2.6"/><path d="M2 19.5c0-3.2 2.3-5.7 5.5-5.7"/><path d="M22 19.5c0-3.2-2.3-5.7-5.5-5.7"/><path d="M7.5 20.5c0-2.6 2-4.6 4.5-4.6s4.5 2 4.5 4.6"/></svg>
<div class="t" style="left:427px;top:756.83px;font-size:17.8px;font-weight:700;color:#f3f4f6;">Unique Customers</div>
<svg class="ic" style="left:594.15px;top:755.75px;width:20.5px;height:20.5px;color:#6b7280" viewBox="0 0 24 24" fill="none" stroke="currentColor" stroke-width="1.4" stroke-linecap="round" stroke-linejoin="round"><circle cx="12" cy="12" r="9"/><path d="M12 8.5v.01"/><path d="M11 12h1v4h1"/></svg>
<div class="t" style="left:394.5px;top:787.47px;font-size:16.1px;font-weight:400;color:#9ca3af;-webkit-text-stroke:0.22px #9ca3af;">unique customers for period</div>
<svg class="ic" style="left:1347.9px;top:758px;width:11px;height:11px" viewBox="0 0 12 12" fill="none" stroke="#f87171" stroke-width="2.2" stroke-linecap="round" stroke-linejoin="round"><path d="M2 2l8 8M4 10h6V4"/></svg>
<div class="t" style="right:1142.1px;top:755.06px;font-size:16px;font-weight:400;color:#f87171;-webkit-text-stroke:0.22px #f87171;">-14.9%</div>
<svg class="ic" style="left:1481.5px;top:757px;width:20px;height:20px;color:#d1d5db" viewBox="0 0 24 24" fill="none" stroke="currentColor" stroke-width="1.7" stroke-linecap="round" stroke-linejoin="round"><circle cx="6.5" cy="4.2" r="2.6"/><path d="M2.5 12c0-2.6 1.8-4.5 4-4.5s4 1.9 4 4.5"/><circle cx="16.3" cy="14" r="2.6"/><path d="M12.2 21.5c0-2.6 1.8-4.4 4.1-4.4s4.1 1.8 4.1 4.4"/><path d="M13 3.2a5.5 5.5 0 0 1 5.5 5"/><path d="M17 7l1.5 1.5L20 7"/><path d="M3.5 14a5.5 5.5 0 0 0 5 6"/><path d="M7 19l1.5 1.3L7 21.8"/></svg>
<div class="t" style="left:1515px;top:756.83px;font-size:17.8px;font-weight:700;color:#f3f4f6;">New vs Returning</div>
<svg class="ic" style="left:1677.55px;top:755.75px;width:20.5px;height:20.5px;color:#6b7280" viewBox="0 0 24 24" fill="none" stroke="currentColor" stroke-width="1.4" stroke-linecap="round" stroke-linejoin="round"><circle cx="12" cy="12" r="9"/><path d="M12 8.5v.01"/><path d="M11 12h1v4h1"/></svg>
<div class="t" style="left:1482.5px;top:787.47px;font-size:16.1px;font-weight:400;color:#9ca3af;-webkit-text-stroke:0.22px #9ca3af;">new vs returning ratio</div>
<svg class="ic" style="left:2436px;top:758px;width:11px;height:11px" viewBox="0 0 12 12" fill="none" stroke="#f87171" stroke-width="2.2" stroke-linecap="round" stroke-linejoin="round"><path d="M2 2l8 8M4 10h6V4"/></svg>
<div class="t" style="right:54px;top:755.06px;font-size:16px;font-weight:400;color:#f87171;-webkit-text-stroke:0.22px #f87171;">-10.8%</div>
<svg class="abs" width="2560" height="1232" viewBox="0 0 2560 1232"><path d="M458.8 844V1086" stroke="#1e2635" stroke-width="1" stroke-dasharray="3 3"/><path d="M578.2 844V1086" stroke="#1e2635" stroke-width="1" stroke-dasharray="3 3"/><path d="M697.6 844V1086" stroke="#1e2635" stroke-width="1" stroke-dasharray="3 3"/><path d="M817.0 844V1086" stroke="#1e2635" stroke-width="1" stroke-dasharray="3 3"/><path d="M936.4 844V1086" stroke="#1e2635" stroke-width="1" stroke-dasharray="3 3"/><path d="M1055.8 844V1086" stroke="#1e2635" stroke-width="1" stroke-dasharray="3 3"/><path d="M1175.2 844V1086" stroke="#1e2635" stroke-width="1" stroke-dasharray="3 3"/><path d="M1294.6 844V1086" stroke="#1e2635" stroke-width="1" stroke-dasharray="3 3"/><path d="M1414.0 844V1086" stroke="#1e2635" stroke-width="1" stroke-dasharray="3 3"/><defs><linearGradient id="bg1" x1="0" y1="0" x2="0" y2="1"><stop offset="0" stop-color="#5fc697" stop-opacity="0.16"/><stop offset="1" stop-color="#5fc697" stop-opacity="0.02"/></linearGradient></defs><path d="M458.80,953.30C498.60,903.62,538.40,853.93,578.20,852.20C618.00,850.47,657.80,849.60,697.60,849.60C737.40,849.60,777.20,911.20,817.00,911.20C856.80,911.20,896.60,906.00,936.40,906.00C976.20,906.00,1016.00,937.00,1055.80,937.00C1095.60,937.00,1135.40,905.20,1175.20,905.20C1215.00,905.20,1254.80,913.85,1294.60,920.40C1334.40,926.95,1374.20,935.73,1414.00,944.50L1414.0,1086L458.8,1086Z" fill="url(#bg1)"/><path d="M458.80,953.30C498.60,934.84,538.40,916.38,578.20,905.00C618.00,893.62,657.80,885.00,697.60,885.00C737.40,885.00,777.20,888.50,817.00,890.00C856.80,891.50,896.60,892.25,936.40,894.00C976.20,895.75,1016.00,899.77,1055.80,900.50C1095.60,901.23,1135.40,901.60,1175.20,901.60C1215.00,901.60,1254.80,897.00,1294.60,897.00C1334.20,897.00,1373.80,903.30,1413.40,909.60" stroke="#566e68" stroke-width="2" fill="none" stroke-dasharray="7 5"/><path d="M458.80,953.30C498.60,903.62,538.40,853.93,578.20,852.20C618.00,850.47,657.80,849.60,697.60,849.60C737.40,849.60,777.20,911.20,817.00,911.20C856.80,911.20,896.60,906.00,936.40,906.00C976.20,906.00,1016.00,937.00,1055.80,937.00C1095.60,937.00,1135.40,905.20,1175.20,905.20C1215.00,905.20,1254.80,913.85,1294.60,920.40C1334.40,926.95,1374.20,935.73,1414.00,944.50" stroke="#5fc697" stroke-width="2.2" fill="none"/><circle cx="458.80" cy="953.30" r="2.6" fill="#5fc697"/><circle cx="578.20" cy="852.20" r="2.6" fill="#5fc697"/><circle cx="697.60" cy="849.60" r="2.6" fill="#5fc697"/><circle cx="817.00" cy="911.20" r="2.6" fill="#5fc697"/><circle cx="936.40" cy="906.00" r="2.6" fill="#5fc697"/><circle cx="1055.80" cy="937.00" r="2.6" fill="#5fc697"/><circle cx="1175.20" cy="905.20" r="2.6" fill="#5fc697"/><circle cx="1294.60" cy="920.40" r="2.6" fill="#5fc697"/><circle cx="1414.00" cy="944.50" r="2.6" fill="#5fc697"/></svg>
<div class="t" style="right:2112px;top:843.05px;font-size:14px;font-weight:400;color:#5b6475;-webkit-text-stroke:0.22px #5b6475;">240</div>
<div class="t" style="right:2112px;top:897.05px;font-size:14px;font-weight:400;color:#5b6475;-webkit-text-stroke:0.22px #5b6475;">180</div>
<div class="t" style="right:2112px;top:957.05px;font-size:14px;font-weight:400;color:#5b6475;-webkit-text-stroke:0.22px #5b6475;">120</div>
<div class="t" style="right:2112px;top:1017.05px;font-size:14px;font-weight:400;color:#5b6475;-webkit-text-stroke:0.22px #5b6475;">60</div>
<div class="t" style="right:2112px;top:1077.35px;font-size:14px;font-weight:400;color:#5b6475;-webkit-text-stroke:0.22px #5b6475;">0</div>
<div class="t" style="left:458.8px;transform:translateX(-50%);top:1101.95px;font-size:14px;font-weight:400;color:#5b6475;-webkit-text-stroke:0.22px #5b6475;">Dec 29–Jan 4</div>
<div class="t" style="left:577.7px;transform:translateX(-50%);top:1101.95px;font-size:14px;font-weight:400;color:#5b6475;-webkit-text-stroke:0.22px #5b6475;">Jan 5–11</div>
<div class="t" style="left:697.4px;transform:translateX(-50%);top:1101.95px;font-size:14px;font-weight:400;color:#5b6475;-webkit-text-stroke:0.22px #5b6475;">Jan 12–18</div>
<div class="t" style="left:816.3px;transform:translateX(-50%);top:1101.95px;font-size:14px;font-weight:400;color:#5b6475;-webkit-text-stroke:0.22px #5b6475;">Jan 19–25</div>
<div class="t" style="left:935.8px;transform:translateX(-50%);top:1101.95px;font-size:14px;font-weight:400;color:#5b6475;-webkit-text-stroke:0.22px #5b6475;">Jan 26–Feb 1</div>
<div class="t" style="left:1055.3px;transform:translateX(-50%);top:1101.95px;font-size:14px;font-weight:400;color:#5b6475;-webkit-text-stroke:0.22px #5b6475;">Feb 2–8</div>
<div class="t" style="left:1174.8px;transform:translateX(-50%);top:1101.95px;font-size:14px;font-weight:400;color:#5b6475;-webkit-text-stroke:0.22px #5b6475;">Feb 9–15</div>
<div class="t" style="right:1142px;top:1101.95px;font-size:14px;font-weight:400;color:#5b6475;-webkit-text-stroke:0.22px #5b6475;">Feb 23–Mar 1</div>
<div class="r" style="left:827.7px;top:1146.4px;width:11px;height:11px;background:#5fc697;border-radius:2px"></div>
<div class="t" style="left:846.3px;top:1143.09px;font-size:16.2px;font-weight:400;color:#f3f4f6;-webkit-text-stroke:0.45px #f3f4f6">Unique Customers</div>
<svg class="abs" width="2560" height="1232" viewBox="0 0 2560 1232"><path d="M1547.6 844V1086M2501.6 844V1086" stroke="#1e2635" stroke-width="1" stroke-dasharray="3 3"/><defs><linearGradient id="bg2" x1="0" y1="0" x2="0" y2="1"><stop offset="0" stop-color="#8b7ad8" stop-opacity="0.22"/><stop offset="1" stop-color="#8b7ad8" stop-opacity="0.03"/></linearGradient><linearGradient id="bg3" x1="0" y1="0" x2="0" y2="1"><stop offset="0" stop-color="#e98282" stop-opacity="0.16"/><stop offset="1" stop-color="#e98282" stop-opacity="0"/></linearGradient></defs><path d="M1547.6,853.6L2501.6,909.5L2501.6,1086L1547.6,1086Z" fill="url(#bg2)"/><path d="M1547.6,1019.4L2501.6,1032.2L2501.6,1086L1547.6,1086Z" fill="url(#bg3)"/><path d="M1547.6,918.2L2501.6,939.9" stroke="#6a6494" stroke-width="2" stroke-dasharray="7 5"/><path d="M1547.6,1019.4L2501.6,1025.7" stroke="#4a4d60" stroke-width="2" stroke-dasharray="7 5"/><path d="M1547.6,853.6L2501.6,909.5" stroke="#9d87e3" stroke-width="2.2"/><path d="M1547.6,1019.4L2501.6,1032.2" stroke="#e98282" stroke-width="2.2"/><circle cx="1547.6" cy="853.6" r="3" fill="#9d87e3"/><circle cx="2501.6" cy="909.5" r="3" fill="#9d87e3"/><circle cx="1547.6" cy="1019.4" r="3" fill="#e98282"/><circle cx="2501.6" cy="1032.2" r="3" fill="#e98282"/></svg>
<div class="t" style="right:1023.4000000000001px;top:843.05px;font-size:14px;font-weight:400;color:#5b6475;-webkit-text-stroke:0.22px #5b6475;">600</div>
<div class="t" style="right:1023.4000000000001px;top:897.05px;font-size:14px;font-weight:400;color:#5b6475;-webkit-text-stroke:0.22px #5b6475;">450</div>
<div class="t" style="right:1023.4000000000001px;top:957.05px;font-size:14px;font-weight:400;color:#5b6475;-webkit-text-stroke:0.22px #5b6475;">300</div>
<div class="t" style="right:1023.4000000000001px;top:1016.85px;font-size:14px;font-weight:400;color:#5b6475;-webkit-text-stroke:0.22px #5b6475;">150</div>
<div class="t" style="right:1023.4000000000001px;top:1077.15px;font-size:14px;font-weight:400;color:#5b6475;-webkit-text-stroke:0.22px #5b6475;">0</div>
<div class="t" style="left:1526.3px;top:1101.45px;font-size:14px;font-weight:400;color:#5b6475;-webkit-text-stroke:0.22px #5b6475;">Jan 26</div>
<div class="t" style="right:52px;top:1101.45px;font-size:14px;font-weight:400;color:#5b6475;-webkit-text-stroke:0.22px #5b6475;">Feb 26</div>
<div class="r" style="left:1910.5px;top:1146.4px;width:11px;height:11px;background:#f08080;border-radius:2px"></div>
<div class="t" style="left:1928.3px;top:1142.83px;font-size:16.5px;font-weight:400;color:#f3f4f6;-webkit-text-stroke:0.45px #f3f4f6">New</div>
<div class="r" style="left:1984.7px;top:1146.4px;width:11px;height:11px;background:#ae8de6;border-radius:2px"></div>
<div class="t" style="left:2002.9px;top:1142.83px;font-size:16.5px;font-weight:400;color:#f3f4f6;-webkit-text-stroke:0.45px #f3f4f6">Returning</div>
<svg class="ic" style="left:394px;top:1218px;width:20px;height:20px;color:#d1d5db" viewBox="0 0 24 24" fill="none" stroke="currentColor" stroke-width="1.7" stroke-linecap="round" stroke-linejoin="round"><path d="M1.5 9.5h21"/><path d="M3.5 9.5l2.2 9.3a2.2 2.2 0 0 0 2.1 1.7h8.4a2.2 2.2 0 0 0 2.1-1.7l2.2-9.3"/><path d="M7 7.5l2.2-4.3M17 7.5l-2.2-4.3"/><path d="M8 12.5v4.5M12 12.5v4.5M16 12.5v4.5"/></svg>
<div class="t" style="left:427.3px;top:1220.93px;font-size:17.8px;font-weight:700;color:#f3f4f6;">Purchase Frequency</div>
<svg class="ic" style="left:608.4px;top:1218px;width:17.5px;height:17.5px;color:#6b7280" viewBox="0 0 24 24" fill="none" stroke="currentColor" stroke-width="1.5" stroke-linecap="round" stroke-linejoin="round"><circle cx="12" cy="12" r="9"/><path d="M12 8.5v.01"/><path d="M11 12h1v4h1"/></svg>
<svg class="ic" style="left:1483px;top:1218px;width:20px;height:20px;color:#d1d5db" viewBox="0 0 24 24" fill="none" stroke="currentColor" stroke-width="1.7" stroke-linecap="round" stroke-linejoin="round"><path d="M9 4.3A8.3 8.3 0 0 0 11.5 20.5"/><path d="M15 3.5a8.3 8.3 0 0 1 3.3 15"/><path d="M5.5 5h3.8V8.5"/><path d="M21 19.5h-4v-3.8"/></svg>
<div class="t" style="left:1515.2px;top:1220.93px;font-size:17.8px;font-weight:700;color:#f3f4f6;">Customer Growth</div>
<svg class="ic" style="left:1679px;top:1218px;width:17.5px;height:17.5px;color:#6b7280" viewBox="0 0 24 24" fill="none" stroke="currentColor" stroke-width="1.5" stroke-linecap="round" stroke-linejoin="round"><circle cx="12" cy="12" r="9"/><path d="M12 8.5v.01"/><path d="M11 12h1v4h1"/></svg>
<svg class="ic" style="left:2436px;top:1222px;width:11px;height:11px" viewBox="0 0 12 12" fill="none" stroke="#22c55e" stroke-width="2.2" stroke-linecap="round" stroke-linejoin="round"><path d="M2 10l8-8M4 2h6v6"/></svg>
<div class="t" style="right:54px;top:1219.96px;font-size:16px;font-weight:400;color:#22c55e;-webkit-text-stroke:0.22px #22c55e;">+44.3%</div>
</body></html>
